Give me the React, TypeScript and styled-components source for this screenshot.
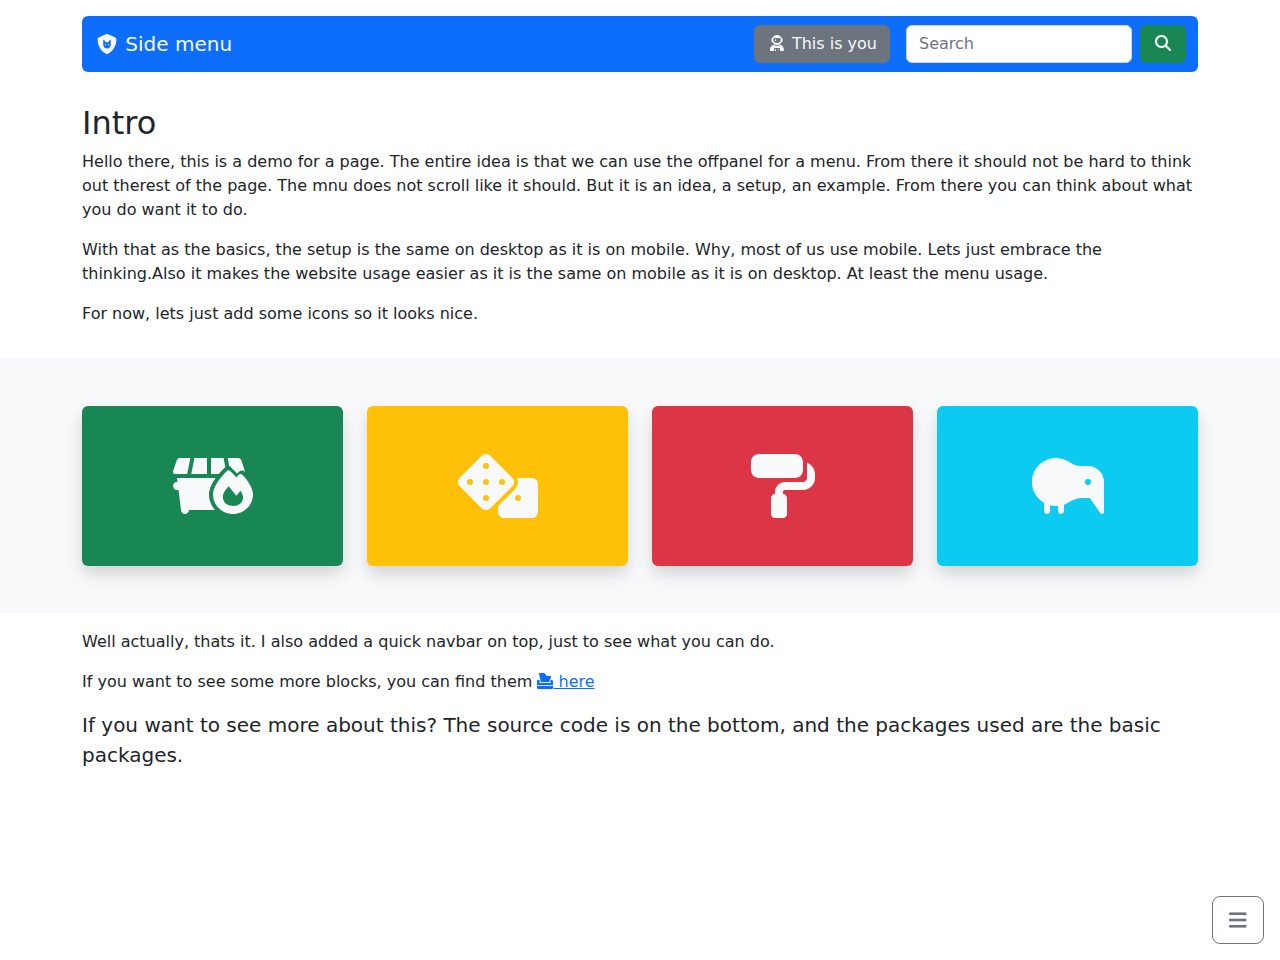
import React from "react";
import styled, { createGlobalStyle, css } from "styled-components";
import {
  FaBars,
  FaBoxTissue,
  FaKiwiBird,
  FaMagnifyingGlass,
  FaPaintRoller,
  FaShieldCat,
} from "react-icons/fa6";

const GlobalStyle = createGlobalStyle`
  *, *::before, *::after { box-sizing: border-box; }
  body {
    margin: 0;
    background: #fff;
    color: #212529;
    font-family: "DejaVu Sans", sans-serif;
    font-size: 16px;
    line-height: 1.5;
  }
`;

const Container = styled.div`
  width: 100%;
  max-width: 1140px;
  margin: 0 auto;
  padding: 0 12px;
`;

const Header = styled(Container)`
  padding-top: 16px;
`;

const Navbar = styled.nav`
  display: flex;
  align-items: center;
  height: 56px;
  padding: 0 12px;
  border-radius: 6px;
  background: #0d6efd;
`;

const Brand = styled.a`
  margin-right: auto;
  color: #f8f9fa;
  font-size: 20px;
  line-height: 30px;
  text-decoration: none;
  white-space: nowrap;
`;

const Icon = styled.span<{ $fixed?: boolean; $ratio?: number; $weight?: number }>`
  display: inline-block;
  line-height: 1;
  text-align: center;
  ${({ $fixed }) => $fixed && css`width: 1.25em;`}

  svg {
    display: block;
    height: 1em;
    width: ${({ $ratio = 1 }) => $ratio}em;
    margin: 0 auto;
    overflow: visible;
    fill: currentColor;
    stroke: currentColor;
    stroke-width: ${({ $weight = 0 }) => $weight};
  }
`;

const InlineIcon = styled(Icon)`
  vertical-align: -0.125em;
`;

const Button = styled.button<{ $tone: string }>`
  height: 38px;
  padding: 6px 12px;
  border: 1px solid ${({ $tone }) => $tone};
  border-radius: 6px;
  background: ${({ $tone }) => $tone};
  color: #f8f9fa;
  font: inherit;
  white-space: nowrap;
`;

const SearchForm = styled.form`
  display: flex;
  gap: 8px;
  margin-left: 16px;
`;

const SearchInput = styled.input`
  width: 226px;
  height: 38px;
  padding: 5px 12px 7px;
  border: 1px solid #ced4da;
  border-radius: 6px;
  background: #fff;
  color: #212529;
  font: inherit;

  &::placeholder {
    color: #6c757d;
    opacity: 1;
  }
`;

const Intro = styled(Container)`
  padding-top: 32px;
  padding-bottom: 16px;
`;

const Title = styled.h2`
  margin: 0 0 8px;
  font-size: 32px;
  font-weight: 400;
  line-height: 1.2;
`;

const Paragraph = styled.p<{ $lead?: boolean }>`
  margin: 0 0 16px;
  font-size: ${({ $lead }) => ($lead ? "20px" : "16px")};
`;

const Band = styled.section`
  padding: 48px 0;
  background: #f8f9fa;
`;

const Tiles = styled(Container)`
  display: grid;
  grid-template-columns: repeat(4, 1fr);
  gap: 24px;
`;

const Tile = styled.div<{ $tone: string }>`
  display: flex;
  align-items: center;
  justify-content: center;
  height: 160px;
  border-radius: 6px;
  background: ${({ $tone }) => $tone};
  box-shadow: 0 8px 16px rgba(0, 0, 0, 0.15);
  color: #f8f9fa;
  font-size: 64px;
`;

const Outro = styled(Container)`
  padding-top: 16px;
`;

const Link = styled.a`
  color: #0d6efd;
  text-decoration: underline;
`;

const MenuButton = styled.button`
  position: fixed;
  right: 16px;
  bottom: 16px;
  width: 52px;
  height: 48px;
  padding: 8px 16px;
  border: 1px solid #6c757d;
  border-radius: 8px;
  background: transparent;
  color: #6c757d;
  font: inherit;
  font-size: 20px;
`;

const DumpsterFire = () => (
  <svg viewBox="0 0 640 512" aria-hidden="true">
    <path d="M418.8 104.2L404.6 32H304.1L304 159.1h60.77C381.1 140.7 399.1 121.8 418.8 104.2zM272.1 32.12H171.5L145.9 160.1h126.1L272.1 32.12zM461.3 104.2c18.25 16.25 35.51 33.62 51.14 51.49c5.751-5.623 11.38-11.12 17.38-16.37c12-11 30-11 42.5 0c1.125 .9997 2.125 2.124 3.126 3.124c-.125-.7498 .2501-1.5 0-2.249l-28-88c-4-12-14-20.1-27-20.1H437.2l12.25 61.5L461.3 104.2zM16 160.1l97.26-.0223l25.64-127.9H57c-14 0-24 8-28 20.1L.5001 140.2C-2.001 150.3 5.626 160.1 16 160.1zM340.6 192.1L32.01 192.1l4.001 31.99H32C14.3 224 0 238.3 0 256s14.3 32 32 32h12.01L64 448c0 17.7 14.3 32 32 32s32-14.3 32-32h208.8c-30.13-33.74-48.73-77.85-48.73-126.3C288.1 285.8 307.9 238.8 340.6 192.1z" />
    <path
      fillRule="evenodd"
      d="M431 136C438 128 449 128 456 136C474 152 491 169 507 187L524 168C533 157 547 157 556 168C605 216 640 282 640 321.7C640 409.1 568.4 480 480 480S320 409.1 320 321.7C320 272 368 196 431 136zM445 258C418 288 399 312 399 342C399 387 434 416 480 416C525 416 560 388 560 348C560 331 554 315 539 294L507 333z"
    />
  </svg>
);

const Dice = () => (
  <svg viewBox="0 0 640 512" aria-hidden="true">
    <path
      fillRule="evenodd"
      d="M448 224c0-12.56-4.78-25.13-14.35-34.76L258.8 14.35C249.1 4.79 236.5 0 224 0s-25.1 4.79-34.8 14.35L14.35 189.2C4.78 198.9 0 211.4 0 224s4.78 25.17 14.35 34.8L189.2 433.7C198.9 443.2 211.4 448 224 448s25.1-4.78 34.8-14.35l174.8-174.8C443.2 249.1 448 236.6 448 224zM96 248a24 24 0 1 1 0-48 24 24 0 0 1 0 48zM224 376a24 24 0 1 1 0-48 24 24 0 0 1 0 48zM224 248a24 24 0 1 1 0-48 24 24 0 0 1 0 48zM224 120a24 24 0 1 1 0-48 24 24 0 0 1 0 48zM352 248a24 24 0 1 1 0-48 24 24 0 0 1 0 48zM592 192H473.3c4.42 10.27 6.6 21.25 6.6 32.23 0 20.7-7.87 41.38-23.63 57.14L320 417.6V464c0 26.5 21.5 48 48 48h224c26.5 0 48-21.5 48-48V240c0-26.5-21.5-48-48-48zM480 376a24 24 0 1 1 0-48 24 24 0 0 1 0 48z"
    />
  </svg>
);

const Astronaut = () => (
  <svg viewBox="0 0 448 512" aria-hidden="true">
    <path d="M176 448C167.3 448 160 455.3 160 464V512h32v-48C192 455.3 184.8 448 176 448zM272 448c-8.75 0-16 7.25-16 16s7.25 16 16 16s16-7.25 16-16S280.8 448 272 448zM164 172l8.205 24.62c1.215 3.645 6.375 3.645 7.59 0L188 172l24.62-8.203c3.646-1.219 3.646-6.375 0-7.594L188 148L179.8 123.4c-1.215-3.648-6.375-3.648-7.59 0L164 148L139.4 156.2c-3.646 1.219-3.646 6.375 0 7.594L164 172zM336.1 315.4C304 338.6 265.1 352 224 352s-80.03-13.43-112.1-36.59C46.55 340.2 0 403.3 0 477.3C0 496.5 15.52 512 34.66 512H128v-64c0-17.75 14.25-32 32-32h128c17.75 0 32 14.25 32 32v64h93.34C432.5 512 448 496.5 448 477.3C448 403.3 401.5 340.2 336.1 315.4zM64 224h13.5C102.3 280.5 158.4 320 224 320s121.8-39.5 146.5-96H384c8.75 0 16-7.25 16-16v-96C400 103.3 392.8 96 384 96h-13.5C345.8 39.5 289.6 0 224 0S102.3 39.5 77.5 96H64C55.25 96 48 103.3 48 112v96C48 216.8 55.25 224 64 224zM104 136C104 113.9 125.5 96 152 96h144c26.5 0 48 17.88 48 40V160c0 53-43 96-96 96h-48c-53 0-96-43-96-96V136z" />
  </svg>
);

const tiles = [
  { tone: "#198754", Glyph: DumpsterFire, ratio: 1.25 },
  { tone: "#ffc107", Glyph: Dice, ratio: 1.25 },
  { tone: "#dc3545", Glyph: FaPaintRoller, ratio: 1 },
  { tone: "#0dcaf0", Glyph: FaKiwiBird, ratio: 1.125 },
];

export default function App() {
  return (
    <>
      <GlobalStyle />
      <Header>
        <Navbar>
          <Brand href="#">
            <InlineIcon $fixed><FaShieldCat /></InlineIcon> Side menu
          </Brand>
          <Button type="button" $tone="#6c757d">
            <InlineIcon $fixed $ratio={0.875}><Astronaut /></InlineIcon> This is you
          </Button>
          <SearchForm>
            <SearchInput type="search" placeholder="Search" aria-label="Search" />
            <Button type="button" $tone="#198754" aria-label="Submit search">
              <InlineIcon $fixed $weight={4}><FaMagnifyingGlass /></InlineIcon>
            </Button>
          </SearchForm>
        </Navbar>
      </Header>
      <Intro>
        <Title>Intro</Title>
        <Paragraph>
          Hello there, this is a demo for a page. The entire idea is that we can use the offpanel for a menu. From
          there it should not be hard to think out therest of the page. The mnu does not scroll like it should. But it
          is an idea, a setup, an example. From there you can think about what you do want it to do.
        </Paragraph>
        <Paragraph>
          With that as the basics, the setup is the same on desktop as it is on mobile. Why, most of us use mobile.
          Lets just embrace the thinking.Also it makes the website usage easier as it is the same on mobile as it is on
          desktop. At least the menu usage.
        </Paragraph>
        <Paragraph>For now, lets just add some icons so it looks nice.</Paragraph>
      </Intro>
      <Band>
        <Tiles>
          {tiles.map(({ tone, Glyph, ratio }) => (
            <Tile key={tone} $tone={tone}>
              <Icon $ratio={ratio}><Glyph /></Icon>
            </Tile>
          ))}
        </Tiles>
      </Band>
      <Outro>
        <Paragraph>Well actually, thats it. I also added a quick navbar on top, just to see what you can do.</Paragraph>
        <Paragraph>
          If you want to see some more blocks, you can find them{" "}
          <Link href="#"><InlineIcon $weight={6}><FaBoxTissue /></InlineIcon> here</Link>
        </Paragraph>
        <Paragraph $lead>
          If you want to see more about this? The source code is on the bottom, and the packages used are the basic
          packages.
        </Paragraph>
      </Outro>
      <MenuButton type="button" aria-label="Open menu">
        <InlineIcon $ratio={0.875} $weight={4}><FaBars /></InlineIcon>
      </MenuButton>
    </>
  );
}
